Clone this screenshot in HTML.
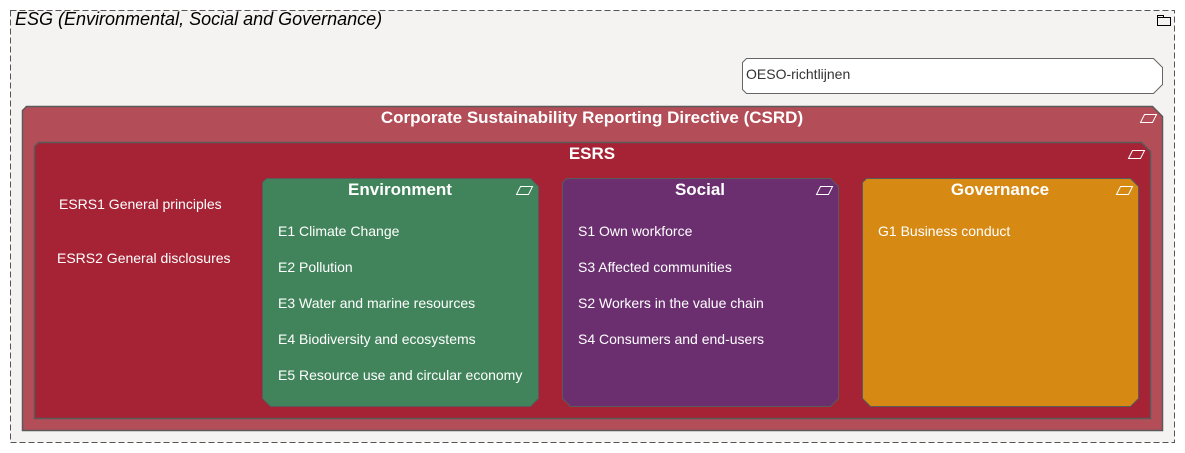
<!DOCTYPE html>
<html><head><meta charset="utf-8"><style>
body{margin:0;width:1185px;height:453px;background:#fff;position:relative;overflow:hidden;font-family:"Liberation Sans",sans-serif}
.t{position:absolute;color:#fff;font-size:14px;white-space:nowrap}
.h{position:absolute;color:#fff;font-size:17px;font-weight:bold;text-align:center}
</style></head><body>
<svg width="1185" height="453" style="position:absolute;left:0;top:0">
<rect x="10.5" y="10.5" width="1164" height="432" fill="#f4f3f1" stroke="#555" stroke-dasharray="6,3"/>
<rect x="1157.5" y="17.5" width="13" height="8" fill="none" stroke="#000"/><path d="M1157.5 17.5v-2h6v2" fill="none" stroke="#000"/>
<polygon points="746.5,58.5 1153.5,58.5 1162.5,67.5 1162.5,84.5 1153.5,93.5 746.5,93.5 742.5,89.5 742.5,62.5" fill="#fff" stroke="#666"/>
<polygon points="26.5,106.5 1152.5,106.5 1162.5,116.5 1162.5,430.5 22.5,430.5 22.5,110.5" fill="#b34d57" stroke="#5a5a5a" stroke-width="1.5"/>
<polygon points="38.5,142.5 1141.5,142.5 1150.5,151.5 1150.5,418.5 34.5,418.5 34.5,146.5" fill="#a52335" stroke="#5a5a5a" stroke-width="1.5"/>
<polygon points="266.5,178.5 530.5,178.5 538.5,186.5 538.5,398.5 530.5,406.5 270.5,406.5 262.5,398.5 262.5,182.5" fill="#41845b" stroke="#5a5a5a"/>
<polygon points="566.5,178.5 830.5,178.5 838.5,186.5 838.5,398.5 830.5,406.5 570.5,406.5 562.5,398.5 562.5,182.5" fill="#6b2f70" stroke="#5a5a5a"/>
<polygon points="866.5,178.5 1130.5,178.5 1138.5,186.5 1138.5,398.5 1130.5,406.5 870.5,406.5 862.5,398.5 862.5,182.5" fill="#d78a13" stroke="#5a5a5a"/>
<g fill="none" stroke="#fff" stroke-width="1">
<polygon points="1144.5,114.5 1156.5,114.5 1152.5,122.5 1140.5,122.5"/>
<polygon points="1132.5,150.5 1144.5,150.5 1140.5,158.5 1128.5,158.5"/>
<polygon points="520.5,186.5 532.5,186.5 528.5,194.5 516.5,194.5"/>
<polygon points="820.5,186.5 832.5,186.5 828.5,194.5 816.5,194.5"/>
<polygon points="1120.5,186.5 1132.5,186.5 1128.5,194.5 1116.5,194.5"/>
</g>
</svg>
<div style="position:absolute;left:15px;top:9px;font-size:18px;font-style:italic;color:#000">ESG (Environmental, Social and Governance)</div>
<div class="t" style="left:746px;top:66px;color:#333">OESO-richtlijnen</div>
<div class="h" style="left:22px;width:1140px;top:108px">Corporate Sustainability Reporting Directive (CSRD)</div>
<div class="h" style="left:34px;width:1116px;top:144px">ESRS</div>
<div class="h" style="left:262px;width:276px;top:180px">Environment</div>
<div class="h" style="left:562px;width:276px;top:180px">Social</div>
<div class="h" style="left:862px;width:276px;top:180px">Governance</div>
<div class="t" style="left:59px;top:196px">ESRS1 General principles</div>
<div class="t" style="left:57px;top:250px">ESRS2 General disclosures</div>
<div class="t" style="left:278px;top:223px">E1 Climate Change</div>
<div class="t" style="left:278px;top:259px">E2 Pollution</div>
<div class="t" style="left:278px;top:295px">E3 Water and marine resources</div>
<div class="t" style="left:278px;top:331px">E4 Biodiversity and ecosystems</div>
<div class="t" style="left:278px;top:367px">E5 Resource use and circular economy</div>
<div class="t" style="left:578px;top:223px">S1 Own workforce</div>
<div class="t" style="left:578px;top:259px">S3 Affected communities</div>
<div class="t" style="left:578px;top:295px">S2 Workers in the value chain</div>
<div class="t" style="left:578px;top:331px">S4 Consumers and end-users</div>
<div class="t" style="left:878px;top:223px">G1 Business conduct</div>
</body></html>
